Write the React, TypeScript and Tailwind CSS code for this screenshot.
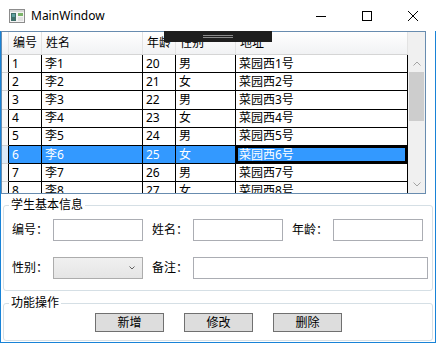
import React from 'react';

const students = [
  ['1', '李1', '20', '男', '菜园西1号'],
  ['2', '李2', '21', '女', '菜园西2号'],
  ['3', '李3', '22', '男', '菜园西3号'],
  ['4', '李4', '23', '女', '菜园西4号'],
  ['5', '李5', '24', '男', '菜园西5号'],
  ['6', '李6', '25', '女', '菜园西6号'],
  ['7', '李7', '26', '男', '菜园西7号'],
  ['8', '李8', '27', '女', '菜园西8号'],
];

const cols = ['编号', '姓名', '年龄', '性别', '地址'];
const widths = ['w-[33px]', 'w-[101px]', 'w-[33px]', 'w-[60px]', 'w-[172px]'];

function WindowIcon() {
  return (
    <svg width="16" height="14" viewBox="0 0 16 14" className="shrink-0">
      <rect x="0.5" y="0.5" width="15" height="13" fill="#f4f4f4" stroke="#8c8c8c" />
      <rect x="1" y="1" width="14" height="2" fill="#d6d6d6" />
      <rect x="2" y="4" width="5" height="8" fill="#3f6f6a" />
      <rect x="3" y="5" width="3" height="3" fill="#5fa0a0" />
      <rect x="9" y="4" width="5" height="3" fill="#7bb36a" />
      <rect x="9" y="8" width="5" height="4" fill="#e2e2e2" />
    </svg>
  );
}

function TitleBar() {
  return (
    <div className="h-[31px] flex items-center bg-white">
      <div className="pl-[9px] pr-[6px] flex items-center">
        <WindowIcon />
      </div>
      <span className="text-[12px] text-black leading-none">MainWindow</span>
      <div className="ml-auto flex h-full">
        <div className="w-[46px] flex items-center justify-center">
          <svg width="10" height="10" viewBox="0 0 10 10">
            <line x1="0" y1="5.5" x2="10" y2="5.5" stroke="#000" strokeWidth="1" />
          </svg>
        </div>
        <div className="w-[46px] flex items-center justify-center">
          <svg width="10" height="10" viewBox="0 0 10 10">
            <rect x="0.5" y="0.5" width="9" height="9" fill="none" stroke="#000" strokeWidth="1" />
          </svg>
        </div>
        <div className="w-[46px] flex items-center justify-center">
          <svg width="10" height="10" viewBox="0 0 10 10">
            <path d="M0 0 L10 10 M10 0 L0 10" stroke="#000" strokeWidth="1" />
          </svg>
        </div>
      </div>
    </div>
  );
}

function DataGrid() {
  return (
    <div className="w-[425px] h-[163px] border border-[#688caf] flex overflow-hidden">
      <div className="w-[406px] flex flex-col overflow-hidden">
        <div className="h-[23px] shrink-0 flex border-b border-[#d5d5d5] bg-gradient-to-b from-white to-[#f1f2f4]">
          <div className="w-[7px] border-r border-[#e3e3e3]" />
          {cols.map((c, i) => (
            <div
              key={c}
              className={`${widths[i]} shrink-0 flex items-center pl-[4px] border-r border-[#e3e3e3] text-[12px]`}
            >
              {c}
            </div>
          ))}
        </div>
        {students.map((r, ri) => {
          const sel = ri === 5;
          return (
            <div
              key={r[0]}
              className={`h-[18.2px] shrink-0 flex ${sel ? 'text-white' : 'text-black'}`}
            >
              <div className={`w-[7px] shrink-0 border-r border-b border-r-black border-b-[#d0d0d0] ${sel ? 'bg-[#dbe9f7]' : 'bg-[#f7f7f7]'}`} />
              {r.map((v, ci) => (
                <div
                  key={ci}
                  className={`${widths[ci]} shrink-0 flex items-center pl-[3px] border-r border-b border-black text-[12px] leading-none ${sel ? 'bg-[#3399ff]' : ''} ${sel && ci === 4 ? 'shadow-[inset_0_0_0_2px_#000]' : ''}`}
                >
                  {v}
                </div>
              ))}
            </div>
          );
        })}
      </div>
      <div className="w-[17px] bg-[#f0f0f0] flex flex-col">
        <div className="h-[23px] shrink-0" />
        <div className="h-[17px] shrink-0 flex items-center justify-center">
          <svg width="8" height="5" viewBox="0 0 8 5">
            <path d="M0.5 4.5 L4 1 L7.5 4.5" fill="none" stroke="#a3a3a3" strokeWidth="1" />
          </svg>
        </div>
        <div className="h-[49px] shrink-0 mx-[1px] bg-[#cdcdcd]" />
        <div className="flex-1" />
        <div className="h-[17px] shrink-0 flex items-center justify-center">
          <svg width="8" height="5" viewBox="0 0 8 5">
            <path d="M0.5 0.5 L4 4 L7.5 0.5" fill="none" stroke="#a3a3a3" strokeWidth="1" />
          </svg>
        </div>
      </div>
    </div>
  );
}

function Field({ label, wide }: { label: string; wide?: boolean }) {
  return (
    <>
      <span className="w-[41px] shrink-0 text-[12px] leading-none">{label}</span>
      <div className={`${wide ? 'w-[235px]' : 'w-[90px]'} h-[22px] shrink-0 border border-[#abadb3] bg-white`} />
    </>
  );
}

function GroupBox({ title, className, children }: { title: string; className?: string; children: React.ReactNode }) {
  return (
    <fieldset className={`mx-[2px] w-[430px] border border-[#d5dfe5] rounded-[3px] ${className ?? ''}`}>
      <legend className="ml-[5px] px-[2px] text-[12px] leading-[16px] text-black">{title}</legend>
      {children}
    </fieldset>
  );
}

export default function App() {
  return (
    <div className="w-[436px] h-[343px] bg-white flex flex-col overflow-hidden font-['Noto_Sans','Noto_Sans_CJK_SC',sans-serif] text-black relative">
      <TitleBar />
      <div className="flex-1 flex flex-col border-x border-b border-[#1883d7]">
        <DataGrid />
        <GroupBox title="学生基本信息" className="mt-[3px] pt-[6px] pb-[11px]">
          <div className="flex flex-col gap-[16px] pl-[8px]">
            <div className="flex items-center">
              <Field label="编号：" />
              <div className="w-[9px]" />
              <Field label="姓名：" />
              <div className="w-[9px]" />
              <Field label="年龄：" />
            </div>
            <div className="flex items-center">
              <span className="w-[41px] shrink-0 text-[12px] leading-none">性别：</span>
              <div className="w-[90px] h-[22px] shrink-0 border border-[#acacac] bg-gradient-to-b from-[#f0f0f0] to-[#e5e5e5] flex items-center justify-end pr-[7px]">
                <svg width="6" height="4" viewBox="0 0 6 4">
                  <path d="M0.5 0.5 L3 3 L5.5 0.5" fill="none" stroke="#606060" strokeWidth="1" />
                </svg>
              </div>
              <div className="w-[9px]" />
              <Field label="备注：" wide />
            </div>
          </div>
        </GroupBox>
        <GroupBox title="功能操作" className="mt-[4px] pt-[2px] pb-[8px]">
          <div className="flex gap-[20px] pl-[91px]">
            {['新增', '修改', '删除'].map((b) => (
              <button
                key={b}
                className="w-[69px] h-[19px] border border-[#707070] bg-[#dddddd] text-[12px] leading-none flex items-center justify-center"
              >
                {b}
              </button>
            ))}
          </div>
        </GroupBox>
      </div>
      <div className="absolute left-[164px] top-[31px] w-[108px] h-[11px] bg-[#1e1e1e] flex flex-col items-center justify-center gap-[1px]">
        <div className="w-[30px] h-[1px] bg-[#8a8a8a]" />
        <div className="w-[30px] h-[1px] bg-[#8a8a8a]" />
      </div>
    </div>
  );
}
